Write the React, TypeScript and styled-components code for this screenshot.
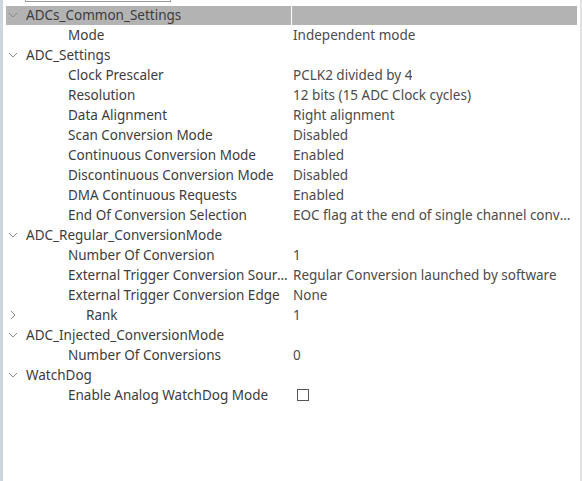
import React from 'react';
import styled, { createGlobalStyle } from 'styled-components';

const GlobalStyle = createGlobalStyle`
  html, body {
    margin: 0;
    padding: 0;
    background: #ffffff;
  }
  body {
    font-family: 'Noto Sans', 'Open Sans', sans-serif;
    font-size: 13.5px;
  }
`;

const Frame = styled.div`
  display: flex;
  width: 582px;
  height: 481px;
  overflow: hidden;
  background: #ffffff;
  border-left: 3px solid #cdd5de;
  box-sizing: border-box;
`;

const Panel = styled.div`
  flex: 1;
  display: flex;
  flex-direction: column;
  padding: 0 3px;
`;

const RightEdge = styled.div`
  width: 2px;
  background: #e2e2e2;
`;

const SearchStub = styled.div`
  margin-left: 19px;
  width: 144px;
  height: 1px;
  border: 1px solid #9a9a9a;
  border-top: none;
  margin-bottom: 3px;
`;

const Row = styled.div<{ $selected?: boolean }>`
  display: flex;
  height: 20px;
  width: 571px;
  line-height: 20px;
  color: #3c3c3c;
  background: ${p =>
    p.$selected
      ? 'linear-gradient(to bottom, transparent 1px, #b3b3b3 1px)'
      : 'transparent'};
`;

const LabelCell = styled.div`
  display: flex;
  align-items: center;
  width: 285px;
  flex-shrink: 0;
  padding: 0 2px 0 2px;
  box-sizing: border-box;
  white-space: nowrap;
  overflow: hidden;
`;

const Twisty = styled.span`
  display: inline-flex;
  align-items: center;
  justify-content: center;
  width: 10px;
  height: 20px;
  margin-right: 8px;
  flex-shrink: 0;
`;

const LabelText = styled.span<{ $indent: number }>`
  margin-left: ${p => p.$indent}px;
  overflow: hidden;
  text-overflow: ellipsis;
`;

const ValueCell = styled.div`
  flex: 1;
  min-width: 0;
  padding-left: 1px;
  border-left: 1px solid #ffffff;
  white-space: nowrap;
  overflow: hidden;
  color: #4b4b4b;
  display: flex;
  align-items: center;
`;

const ValueText = styled.span`
  overflow: hidden;
  text-overflow: ellipsis;
`;

const CheckBox = styled.span`
  display: inline-block;
  width: 10px;
  height: 10px;
  margin-left: 4px;
  border: 1px solid #555555;
  background: #ffffff;
`;

type Item = {
  label: string;
  value?: string;
  kind: 'group' | 'param' | 'sub';
  open?: boolean;
  check?: boolean;
  selected?: boolean;
};

const items: Item[] = [
  { label: 'ADCs_Common_Settings', kind: 'group', open: true, selected: true },
  { label: 'Mode', value: 'Independent mode', kind: 'param' },
  { label: 'ADC_Settings', kind: 'group', open: true },
  { label: 'Clock Prescaler', value: 'PCLK2 divided by 4', kind: 'param' },
  { label: 'Resolution', value: '12 bits (15 ADC Clock cycles)', kind: 'param' },
  { label: 'Data Alignment', value: 'Right alignment', kind: 'param' },
  { label: 'Scan Conversion Mode', value: 'Disabled', kind: 'param' },
  { label: 'Continuous Conversion Mode', value: 'Enabled', kind: 'param' },
  { label: 'Discontinuous Conversion Mode', value: 'Disabled', kind: 'param' },
  { label: 'DMA Continuous Requests', value: 'Enabled', kind: 'param' },
  {
    label: 'End Of Conversion Selection',
    value: 'EOC flag at the end of single channel conversion',
    kind: 'param',
  },
  { label: 'ADC_Regular_ConversionMode', kind: 'group', open: true },
  { label: 'Number Of Conversion', value: '1', kind: 'param' },
  {
    label: 'External Trigger Conversion Source',
    value: 'Regular Conversion launched by software',
    kind: 'param',
  },
  { label: 'External Trigger Conversion Edge', value: 'None', kind: 'param' },
  { label: 'Rank', value: '1', kind: 'sub', open: false },
  { label: 'ADC_Injected_ConversionMode', kind: 'group', open: true },
  { label: 'Number Of Conversions', value: '0', kind: 'param' },
  { label: 'WatchDog', kind: 'group', open: true },
  { label: 'Enable Analog WatchDog Mode', kind: 'param', check: true },
];

const Chevron: React.FC<{ open?: boolean }> = ({ open }) => (
  <svg width="10" height="10" viewBox="0 0 10 10">
    <path
      d={open ? 'M1 3 L5 7 L9 3' : 'M3 1 L7 5 L3 9'}
      fill="none"
      stroke="#8a8a8a"
      strokeWidth="1"
    />
  </svg>
);

const indentFor = (kind: Item['kind']) => {
  if (kind === 'group') return 0;
  if (kind === 'sub') return 60;
  return 42;
};

const App: React.FC = () => (
  <>
    <GlobalStyle />
    <Frame>
      <Panel>
        <SearchStub />
        {items.map(it => (
          <Row key={it.label} $selected={it.selected}>
            <LabelCell>
              <Twisty>
                {it.kind !== 'param' && <Chevron open={it.open} />}
              </Twisty>
              <LabelText $indent={indentFor(it.kind)}>{it.label}</LabelText>
            </LabelCell>
            <ValueCell>
              {it.check ? <CheckBox /> : <ValueText>{it.value}</ValueText>}
            </ValueCell>
          </Row>
        ))}
      </Panel>
      <RightEdge />
    </Frame>
  </>
);

export default App;
